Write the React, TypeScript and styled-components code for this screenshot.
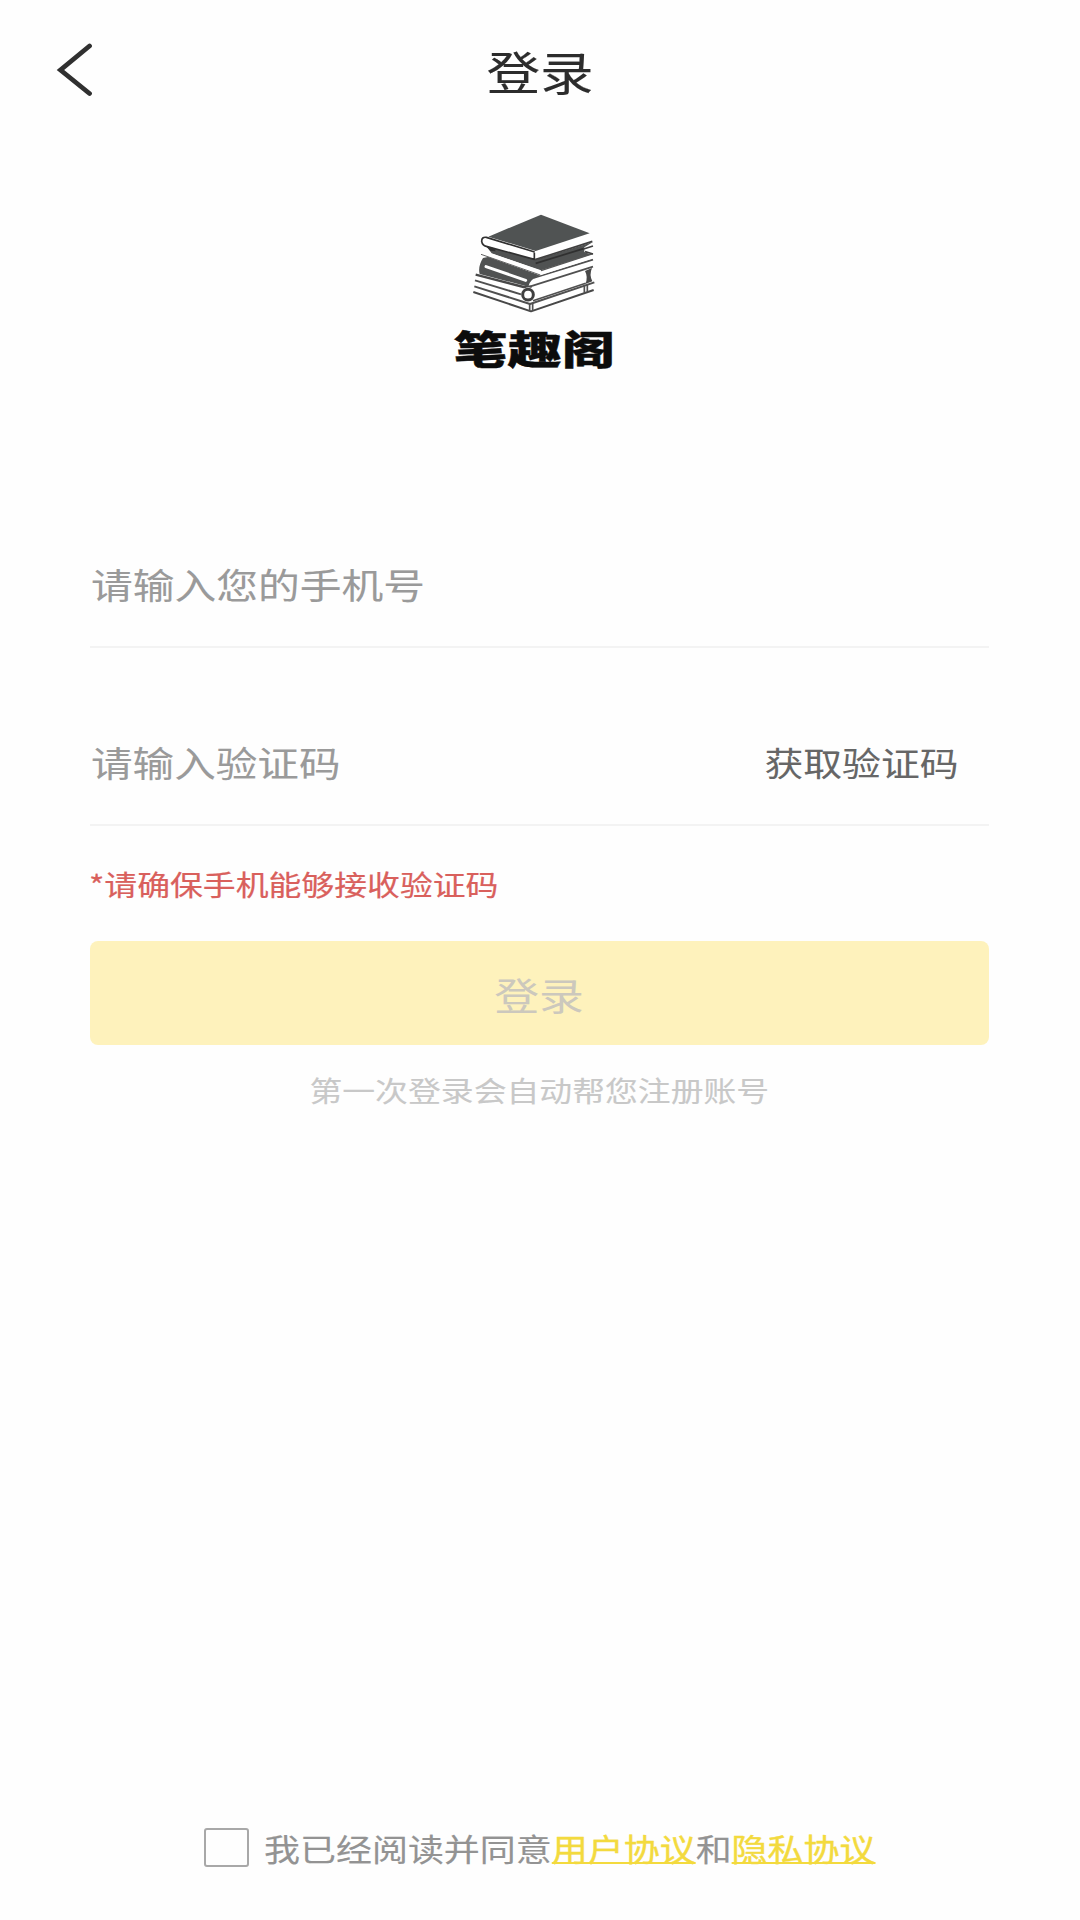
import React, { useState } from "react";
import styled, { createGlobalStyle } from "styled-components";

const GlobalStyle = createGlobalStyle`
  * { box-sizing: border-box; }
  body {
    margin: 0;
    background: #fefefe;
    font-family: "Noto Sans CJK SC", "Noto Sans", sans-serif;
  }
`;

const STRETCH = 1.165;

const Page = styled.div`
  width: 1080px;
  height: 1920px;
  display: flex;
  flex-direction: column;
  background: #fefefe;
  overflow: hidden;
`;

const Text = styled.span<{ $size: number; $color: string; $origin?: string; $stretch?: number; $weight?: number }>`
  display: block;
  padding-top: 2px;
  font-size: ${(p) => p.$size}px;
  line-height: 40px;
  color: ${(p) => p.$color};
  -webkit-text-stroke: ${(p) => p.$weight ?? 0}px currentColor;
  white-space: nowrap;
  transform: scaleX(${(p) => p.$stretch ?? STRETCH});
  transform-origin: ${(p) => p.$origin ?? "center"} center;
`;

const Header = styled.header`
  height: 138px;
  display: grid;
  grid-template-columns: 150px 1fr 150px;
  align-items: center;
  justify-items: center;
`;

const BackButton = styled.button`
  display: flex;
  padding: 2px 0 0;
  border: 0;
  background: none;
`;

const Brand = styled.div`
  height: 382px;
  padding: 75px 11px 0 0;
  display: flex;
  flex-direction: column;
  align-items: center;
`;

const BrandName = styled.span`
  display: block;
  margin-top: 13px;
  font-size: 39px;
  line-height: 40px;
  font-weight: 900;
  color: #0c0c0c;
  -webkit-text-stroke: 0.4px #0c0c0c;
  transform: scaleX(1.385);
`;

const Form = styled.form`
  margin: 0 91px 0 90px;
  display: flex;
  flex-direction: column;
`;

const Field = styled.div`
  height: 128px;
  padding: 0 31px 0 1px;
  display: flex;
  align-items: center;
  justify-content: space-between;
  border-bottom: 2px solid #f3f3f3;

  & + & {
    margin-top: 50px;
  }
`;

const Warning = styled.div`
  margin: 36px 0 0 -1px;
  display: flex;
`;

const Submit = styled.button`
  margin-top: 37px;
  height: 104px;
  padding: 0;
  display: flex;
  align-items: center;
  justify-content: center;
  border: 0;
  border-radius: 8px;
  background: #fef2bc;
  font-family: inherit;
`;

const Hint = styled.div`
  margin-top: 23px;
  display: flex;
  justify-content: center;
`;

const Footer = styled.footer`
  margin-top: auto;
  height: 93px;
  padding: 0 0 53px 204px;
  display: flex;
  align-items: center;
  gap: 15px;
`;

const Checkbox = styled.button`
  width: 45px;
  height: 39px;
  padding: 0;
  border: 2px solid #a8a8a8;
  border-radius: 3px;
  background: #fefefe;
`;

const Link = styled.span`
  color: #f3da3e;
  -webkit-text-stroke: 0.4px #f3da3e;
  text-decoration: underline;
  text-decoration-thickness: 2px;
  text-underline-offset: 1px;
  text-decoration-skip-ink: none;
`;

function BackIcon() {
  return (
    <svg width="38" height="54" viewBox="0 0 38 54" fill="none">
      <path d="M33.500 3 4.500 27l29 23.500" stroke="#303030" strokeWidth="4.800" strokeLinecap="round" />
    </svg>
  );
}

function Books() {
  return (
    <svg width="125" height="101" viewBox="21 25 375 303" fill="none" strokeLinejoin="round">
      {/* bottom book */}
      <path d="M30 245 195 298 386 234V256L198 320 25 262Z" fill="#fff" />
      <path d="M25 262 198 320 386 256" stroke="#484848" strokeWidth="6" />
      <path d="M28 245 195 298 388 233" stroke="#505050" strokeWidth="6" />
      <path d="M194 296v24M203 294v24M358 242v22M367 240v21" stroke="#505050" strokeWidth="5" />
      {/* fourth book */}
      <path d="M32 210 200 248 366 196 364 236 206 286 170 284 30 240Z" fill="#fff" />
      <path d="M32 210 176 247 200 246" stroke="#484848" strokeWidth="7" />
      <path d="M30 227 168 269" stroke="#505050" strokeWidth="6" />
      <path d="M204 288 362 236" stroke="#505050" strokeWidth="5" />
      <path d="M360 199 381 190Q372 210 382 230L361 238Q370 218 360 199Z" fill="#484848" />
      <ellipse cx="190" cy="269" rx="19" ry="21" fill="#fff" />
      <ellipse cx="189" cy="270" rx="16" ry="16" fill="#fff" stroke="#404040" strokeWidth="9" />
      {/* third book */}
      <path d="M54 160Q38 186 44 208L190 246Q194 224 224 212L72 156Z" fill="#505252" />
      <path d="M63 186 182 227" stroke="#fff" strokeWidth="9" strokeLinecap="round" />
      <path d="M196 242Q200 226 214 220L384 166V185L206 244Z" fill="#fff" />
      <path d="M194 246 384 186M206 220 384 165" stroke="#505050" strokeWidth="5" />
      {/* second book */}
      <path d="M62 122 80 146 228 198 380 150 358 142V128L384 112 215 164Z" fill="#505252" />
      <path d="M56 144 84 148 228 197 384 148V161L226 212 56 152Z" fill="#fff" />
      <path d="M48 149 226 211" stroke="#606060" strokeWidth="3" />
      <path d="M228 198 384 147" stroke="#555" strokeWidth="4" />
      <path d="M212 176 356 132" stroke="#303030" strokeWidth="5" />
      <path d="M360 133 384 125V144L361 140Z" fill="#fff" />
      <path d="M356 133 384 124M360 141 384 148" stroke="#404040" strokeWidth="5" />
      {/* top book */}
      <path d="M62 96 228 31 372 86 378 110 212 165 62 125Q36 110 62 96Z" fill="#fff" />
      <path d="M70 96 228 30 374 86 212 139Z" fill="#505353" />
      <path d="M209 142 64 98Q50 96 50 110 52 122 64 125L208 164V144" stroke="#303030" strokeWidth="5" />
      <path d="M210 165 382 110" stroke="#404040" strokeWidth="5" />
      <path d="M62 124 88 131 92 140 76 138Z" fill="#303030" />
    </svg>
  );
}

export default function App() {
  const [agreed, setAgreed] = useState(false);

  return (
    <>
      <GlobalStyle />
      <Page>
        <Header>
          <BackButton type="button" aria-label="返回">
            <BackIcon />
          </BackButton>
          <Text $size={46} $color="#2c2c2c" $weight={0.1}>登录</Text>
        </Header>
        <Brand>
          <Books />
          <BrandName>笔趣阁</BrandName>
        </Brand>
        <Form onSubmit={(e) => e.preventDefault()}>
          <Field>
            <Text $size={35.7} $color="#9a9a9a" $origin="left" $stretch={1.17} $weight={0.1}>请输入您的手机号</Text>
          </Field>
          <Field>
            <Text $size={35.7} $color="#9a9a9a" $origin="left" $weight={0.1}>请输入验证码</Text>
            <Text $size={33.3} $color="#666" $origin="right" $weight={0.1}>获取验证码</Text>
          </Field>
          <Warning>
            <Text $size={28.200} $color="#d9605c" $origin="left" $weight={0.2}>*请确保手机能够接收验证码</Text>
          </Warning>
          <Submit type="submit">
            <Text $size={38} $color="#ccc8bd" $stretch={1.18}>登录</Text>
          </Submit>
          <Hint>
            <Text $size={28.200} $color="#c8c8c8" $weight={0.1}>第一次登录会自动帮您注册账号</Text>
          </Hint>
        </Form>
        <Footer>
          <Checkbox type="button" role="checkbox" aria-checked={agreed} onClick={() => setAgreed(!agreed)} />
          <Text $size={30.800} $color="#939393" $origin="left" $stretch={1.168} $weight={0.15}>
            我已经阅读并同意<Link>用户协议</Link>和<Link>隐私协议</Link>
          </Text>
        </Footer>
      </Page>
    </>
  );
}
